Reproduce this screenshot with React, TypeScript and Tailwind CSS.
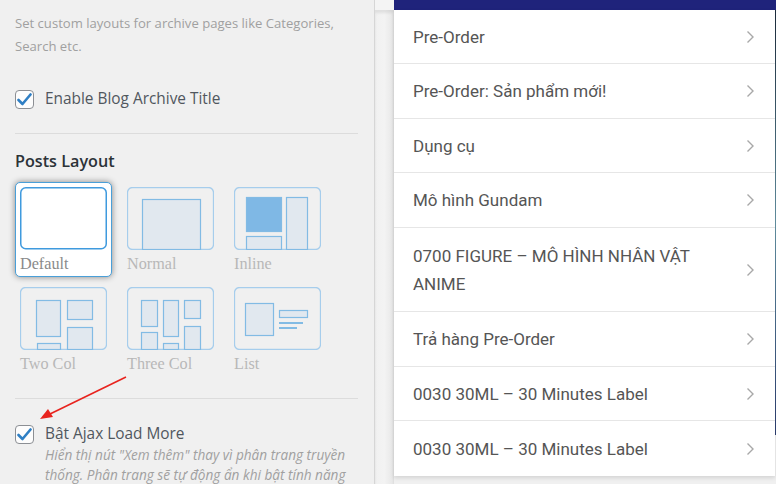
import React from "react";

const sans = { fontFamily: '"Open Sans", "Noto Sans", sans-serif' };

function Check() {
  return (
    <div className="w-[19px] h-[19px] shrink-0 rounded-[4px] border border-[#8c8f94] bg-[#fdfdfd] flex items-center justify-center">
      <svg width="15" height="13" viewBox="0 0 15 13">
        <path d="M1.5 7 L5.5 11 L13.5 1.5" fill="none" stroke="#2f7fc4" strokeWidth="2.6" strokeLinecap="round" strokeLinejoin="round" />
      </svg>
    </div>
  );
}

const OS = "#a6cdec";
const IS = "#82bbe4";
const IF = "#e1e8ef";

function Frame({ children, fill = "none" }: { children?: React.ReactNode; fill?: string }) {
  return (
    <svg width="87" height="63" viewBox="0 0 87 63">
      <rect x="0.5" y="0.5" width="86" height="62" rx="5" fill={fill} stroke={OS} strokeWidth="1.3" />
      {children}
    </svg>
  );
}

function R({ x, y, w, h, f = IF }: { x: number; y: number; w: number; h: number; f?: string }) {
  return <rect x={x + 0.5} y={y + 0.5} width={w} height={h} fill={f} stroke={IS} strokeWidth="1.2" />;
}

const icons: Record<string, React.ReactNode> = {
  Default: (
    <svg width="87" height="63" viewBox="0 0 87 63">
      <rect x="0.75" y="0.75" width="85.5" height="61" rx="5" fill="#fff" stroke="#3f9ade" strokeWidth="1.5" />
    </svg>
  ),
  Normal: (
    <Frame>
      <R x={15} y={12} w={58} h={50} />
    </Frame>
  ),
  Inline: (
    <Frame>
      <R x={12} y={10} w={35} h={34} f="#7fb8e5" />
      <R x={12} y={49} w={35} h={13} />
      <R x={52} y={10} w={21} h={52} />
    </Frame>
  ),
  "Two Col": (
    <Frame>
      <R x={16} y={13} w={24} h={36} />
      <R x={17} y={56} w={23} h={6} />
      <R x={47} y={13} w={25} h={19} />
      <R x={47} y={40} w={25} h={22} />
    </Frame>
  ),
  "Three Col": (
    <Frame>
      <R x={14} y={13} w={16} h={26} />
      <R x={14} y={45} w={16} h={17} />
      <R x={36} y={13} w={15} h={36} />
      <R x={36} y={56} w={15} h={6} />
      <R x={57} y={13} w={16} h={18} />
      <R x={57} y={39} w={16} h={23} />
    </Frame>
  ),
  List: (
    <Frame>
      <R x={11} y={16} w={28} h={32} />
      <R x={45} y={23} w={28} h={7} />
      <rect x="45" y="35" width="24" height="2" fill={IS} />
      <rect x="45" y="40" width="18" height="2" fill={IS} />
    </Frame>
  ),
};

const layouts = ["Default", "Normal", "Inline", "Two Col", "Three Col", "List"];

const menu = [
  "Pre-Order",
  "Pre-Order: Sản phẩm mới!",
  "Dụng cụ",
  "Mô hình Gundam",
  "0700 FIGURE – MÔ HÌNH NHÂN VẬT ANIME",
  "Trả hàng Pre-Order",
  "0030 30ML – 30 Minutes Label",
  "0030 30ML – 30 Minutes Label",
];

export default function App() {
  return (
    <div className="relative w-[776px] h-[484px] overflow-hidden bg-[#f0f0f0] flex" style={sans}>
      {/* Left settings panel */}
      <div className="w-[375px] shrink-0 h-full border-r border-[#d6d6d6] pl-[15px] pr-[16px] pt-[12px]">
        <p className="text-[13.1px] leading-[23px] text-[#a0a0a0] whitespace-nowrap">
          Set custom layouts for archive pages like Categories,
          <br />
          Search etc.
        </p>
        <div className="mt-[31px] flex items-center gap-[11px]">
          <Check />
          <span className="text-[15.4px] text-[#50575e] leading-[20px]">Enable Blog Archive Title</span>
        </div>
        <div className="mt-[24px] h-px bg-[#dcdcdc]" />
        <h3 className="mt-[16px] text-[16.2px] font-semibold text-[#2c3338] leading-[22px]">Posts Layout</h3>
        <div className="mt-[10px] grid grid-cols-[97px_97px_97px] gap-x-[10px] gap-y-[5px]">
          {layouts.map((name) => {
            const sel = name === "Default";
            return (
              <div
                key={name}
                className={
                  sel
                    ? "h-[95px] p-[4px] rounded-[5px] bg-white border border-[#4a9fd8] shadow-[0_0_6px_rgba(0,0,0,0.45)]"
                    : "h-[95px] p-[4px] border border-transparent"
                }
              >
                {icons[name]}
                <div
                  className={
                    "mt-[4px] text-[16.2px] leading-[20px] " + (sel ? "text-[#8a8a8a]" : "text-[#b8b8b8]")
                  }
                  style={{ fontFamily: '"Liberation Serif", "Times New Roman", serif' }}
                >
                  {name}
                </div>
              </div>
            );
          })}
        </div>
        <div className="mt-[21px] h-px bg-[#dcdcdc]" />
        <div className="mt-[25px] flex items-center gap-[11px]">
          <Check />
          <span className="text-[15.4px] text-[#50575e] leading-[20px]">Bật Ajax Load More</span>
        </div>
        <p className="mt-[1px] pl-[30px] italic text-[13.6px] leading-[20px] text-[#a0a0a0] whitespace-nowrap">
          Hiển thị nút "Xem thêm" thay vì phân trang truyền
          <br />
          thống. Phân trang sẽ tự động ẩn khi bật tính năng
        </p>
      </div>

      {/* Gutter */}
      <div className="w-[19px] shrink-0 h-full flex flex-col">
        <div className="h-[10px] bg-[#f4f4f4]" />
        <div className="flex-1 bg-gradient-to-r from-[#f1f1f1] via-[#f3f3f3] to-[#e6e6e6] shadow-[inset_0_3px_3px_rgba(0,0,0,0.08)]" />
      </div>

      {/* Menu */}
      <div className="w-[381px] shrink-0 h-full flex flex-col">
        <div className="h-[10px] bg-[#1f237b]" />
        <div className="bg-white shadow-[0_2px_4px_rgba(0,0,0,0.12)]" style={{ fontFamily: "Roboto, sans-serif" }}>
          {menu.map((m, i) => (
            <div
              key={i}
              className={
                "flex items-center justify-between pl-[19px] pr-[20px] border-b border-[#e6e6e6] " +
                (i === 4 ? "h-[84px]" : i % 2 === 0 ? "h-[54px]" : "h-[55px]") +
                (i === menu.length - 1 ? " border-b-0" : "")
              }
            >
              <span className="text-[17px] leading-[28px] text-[#555555] max-w-[320px]">{m}</span>
              <svg width="9" height="14" viewBox="0 0 9 14" className="shrink-0">
                <path d="M1.5 1.5 L7 7 L1.5 12.5" fill="none" stroke="#a8a8a8" strokeWidth="1.4" />
              </svg>
            </div>
          ))}
        </div>
      </div>

      {/* Right edge strip */}
      <div className="w-px shrink-0 h-full flex flex-col">
        <div className="h-[10px] bg-[#1f237b]" />
        <div className="h-[425px] bg-gradient-to-b from-[#1b2a3a] via-[#5f8c9c] to-[#2a3a6a]" />
      </div>

      {/* Red annotation arrow */}
      <svg className="absolute left-0 top-0 pointer-events-none" width="776" height="484" viewBox="0 0 776 484">
        <line x1="126" y1="377" x2="50" y2="414" stroke="#e8231e" strokeWidth="1.6" />
        <polygon points="40,419 48,409 53,417" fill="#e8231e" />
      </svg>
    </div>
  );
}
